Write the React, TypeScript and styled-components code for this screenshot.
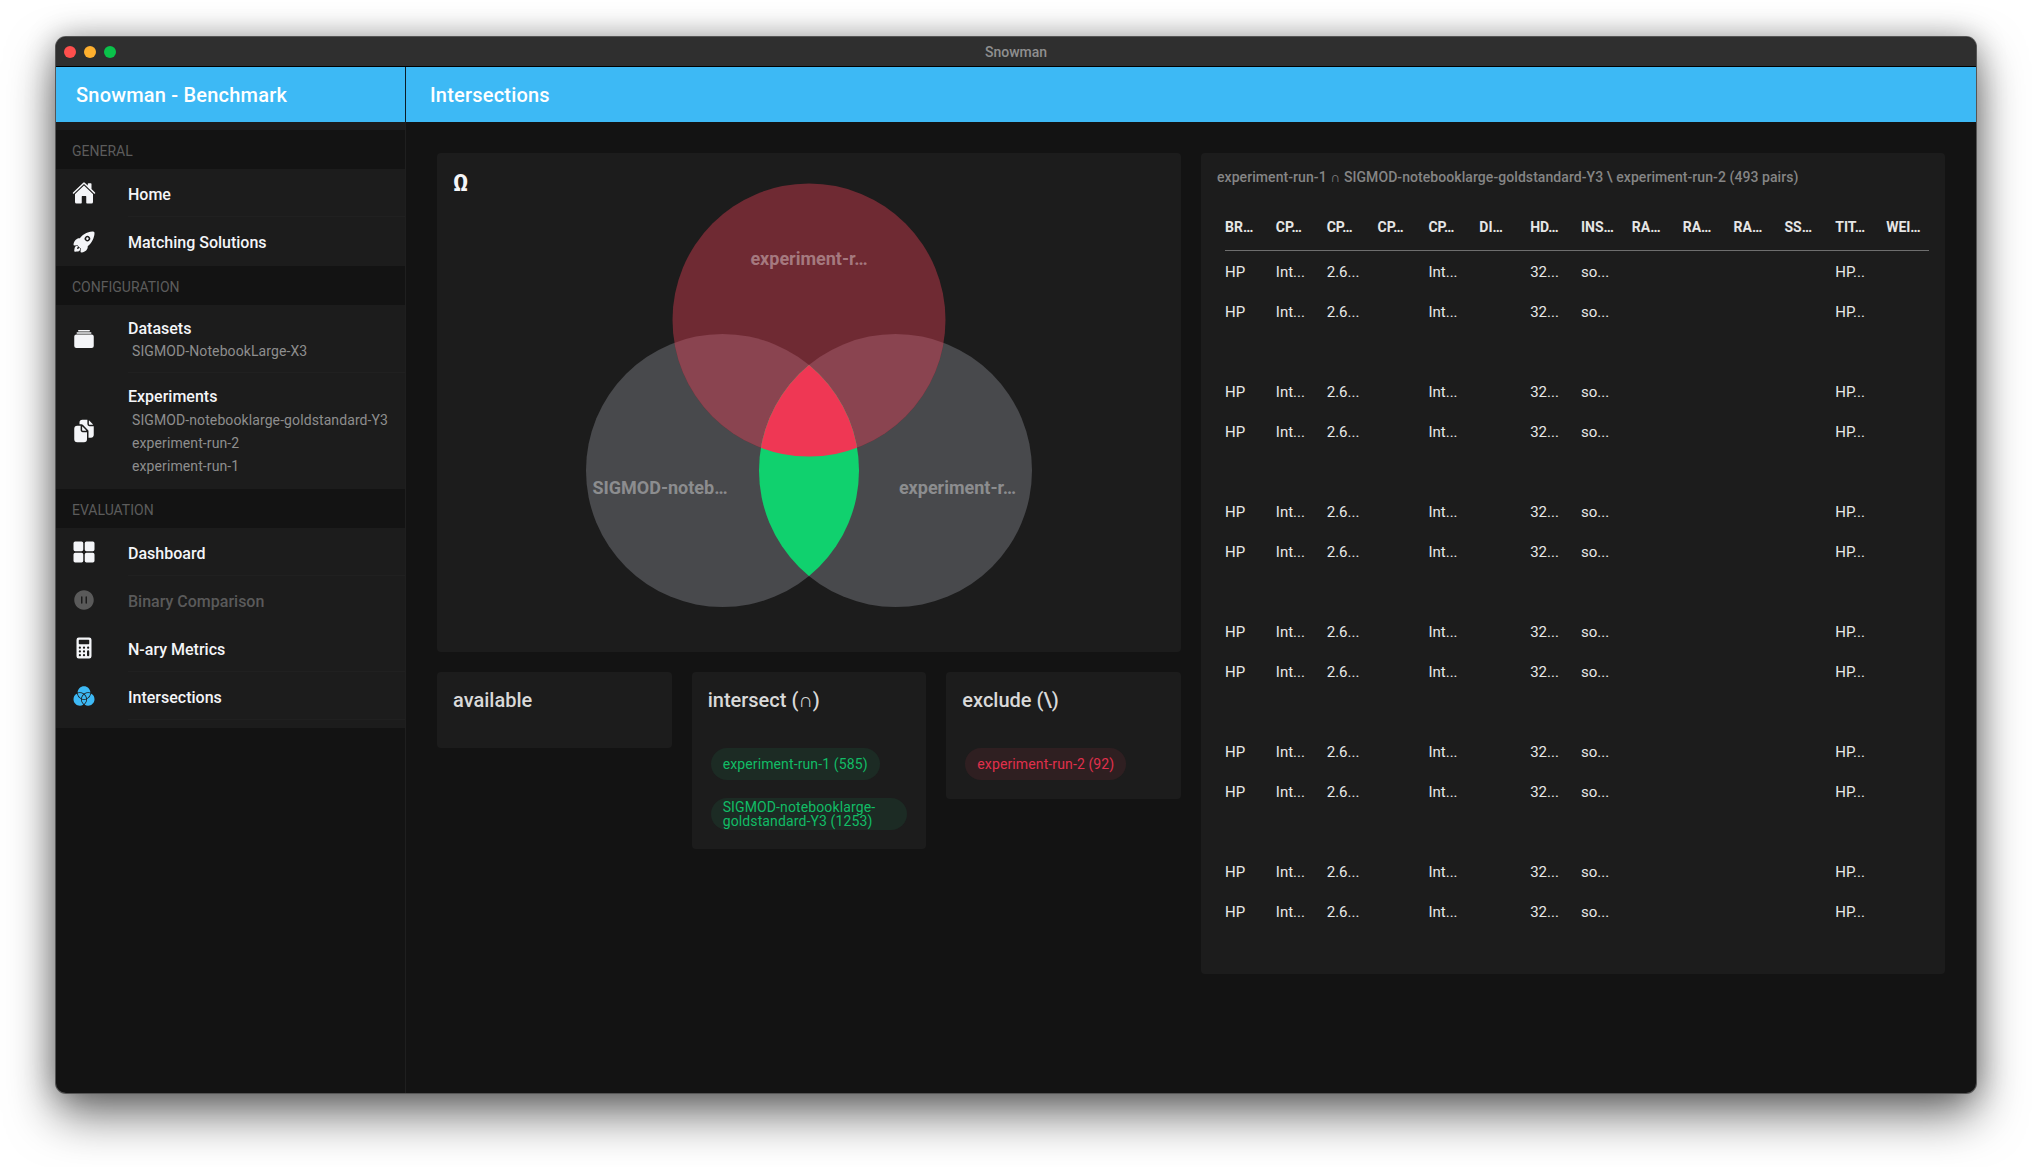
import React from 'react';
import styled, { createGlobalStyle } from 'styled-components';
import {
  IoHome,
  IoRocket,
  IoAlbums,
  IoDocuments,
  IoGrid,
  IoPauseCircle,
  IoCalculator,
  IoColorFilter,
} from 'react-icons/io5';

const GlobalStyle = createGlobalStyle`
  html, body {
    margin: 0;
    padding: 0;
    background: #ffffff;
    font-family: 'Roboto', 'Liberation Sans', sans-serif;
  }
  * { box-sizing: border-box; }
`;

const Desktop = styled.div`
  width: 2032px;
  height: 1167px;
  padding: 37px 56px 74px 56px;
  overflow: hidden;
  background: #ffffff;
`;

const Window = styled.div`
  width: 1920px;
  height: 1056px;
  display: flex;
  flex-direction: column;
  border-radius: 10px;
  overflow: hidden;
  background: #131313;
  box-shadow: 0 0 0 1px #555555, 0 22px 48px rgba(0, 0, 0, 0.55), 0 0 30px rgba(0, 0, 0, 0.3);
`;

const TitleBar = styled.div`
  height: 30px;
  flex: none;
  position: relative;
  display: flex;
  align-items: center;
  justify-content: center;
  background: #2f2f2f;
  border-bottom: 1px solid #000000;
`;

const Lights = styled.div`
  position: absolute;
  left: 8px;
  top: 9px;
  display: flex;
  gap: 8px;
`;

const Light = styled.span<{ $color: string }>`
  width: 12px;
  height: 12px;
  border-radius: 50%;
  background: ${(p) => p.$color};
`;

const WindowTitle = styled.div`
  font-size: 14px;
  font-weight: 500;
  color: #8f8f8f;
`;

const Body = styled.div`
  flex: 1;
  display: flex;
  min-height: 0;
`;

const SideColumn = styled.div`
  width: 350px;
  flex: none;
  display: flex;
  flex-direction: column;
  border-right: 1px solid #1f1f1f;
`;

const AppBar = styled.div`
  height: 55px;
  flex: none;
  display: flex;
  align-items: center;
  background: #3db9f5;
  color: #ffffff;
  font-size: 20px;
  font-weight: 500;
  letter-spacing: 0.2px;
`;

const SideBar = styled(AppBar)`
  padding-left: 20px;
  margin-right: -1px;
  border-right: 1px solid #0c1c26;
`;

const MainBar = styled(AppBar)`
  padding-left: 24px;
`;

const Nav = styled.nav`
  padding: 8px 0;
  background: #1c1c1c;
`;

const SectionLabel = styled.div`
  height: 39px;
  display: flex;
  align-items: center;
  padding: 3px 0 0 16px;
  background: #131313;
  color: #5c5c5c;
  font-size: 14px;
`;

const NavRow = styled.div<{ $height?: number; $disabled?: boolean }>`
  display: flex;
  align-items: center;
  height: ${(p) => p.$height ?? 48}px;
  padding-left: 16px;
  color: ${(p) => (p.$disabled ? '#5a5a5a' : '#f4f5f8')};
`;

const NavIcon = styled.div`
  width: 56px;
  flex: none;
  display: flex;
  align-items: center;
  font-size: 24px;
  svg { display: block; }
`;

const NavIconBlue = styled(NavIcon)`
  color: #3db9f5;
`;

const NavText = styled.div<{ $divider?: boolean; $sub?: boolean }>`
  flex: 1;
  align-self: stretch;
  display: flex;
  flex-direction: column;
  justify-content: center;
  padding-top: ${(p) => (p.$sub ? '2px' : '3px')};
  border-bottom: 1px solid ${(p) => (p.$divider ? '#202020' : 'transparent')};
`;

const NavTitle = styled.div<{ $spaced?: boolean }>`
  font-size: 16px;
  font-weight: 500;
  line-height: 23px;
  margin-bottom: ${(p) => (p.$spaced ? 1 : 0)}px;
`;

const NavSub = styled.div`
  font-size: 14px;
  line-height: 23px;
  padding-left: 4px;
  letter-spacing: 0.1px;
  color: #8e8e8e;
`;

const Main = styled.div`
  flex: 1;
  min-width: 0;
  display: flex;
  flex-direction: column;
`;

const Content = styled.div`
  flex: 1;
  display: grid;
  grid-template-columns: 744px 744px;
  gap: 20px;
  align-items: start;
  padding: 31px 31px 0;
`;

const LeftColumn = styled.div`
  display: flex;
  flex-direction: column;
  gap: 20px;
`;

const Card = styled.div`
  background: #1c1c1c;
  border-radius: 4px;
`;

const VennCard = styled(Card)`
  position: relative;
  height: 499px;
`;

const Omega = styled.div`
  position: absolute;
  left: 16px;
  top: 17px;
  font-size: 23px;
  font-weight: 700;
  color: #f4f5f8;
`;

const VennSvg = styled.svg`
  display: block;
  width: 744px;
  height: 499px;
`;

const VennLabel = styled.text`
  font-family: 'Roboto', sans-serif;
  font-size: 18px;
  font-weight: 700;
  fill: rgba(255, 255, 255, 0.38);
  text-anchor: middle;
`;

const Buckets = styled.div`
  display: grid;
  grid-template-columns: repeat(3, 1fr);
  gap: 20px;
  align-items: start;
`;

const BucketTitle = styled.div`
  height: 76px;
  padding: 16px;
  font-size: 20px;
  font-weight: 500;
  line-height: 24px;
  color: #d9d9d9;
`;

const ChipList = styled.div`
  display: flex;
  flex-direction: column;
  align-items: flex-start;
  gap: 18px;
  padding: 0 19px 19px;
`;

const Chip = styled.div<{ $tone: 'green' | 'red'; $wrapped?: boolean }>`
  height: 32px;
  display: flex;
  align-items: center;
  padding: 0 12px;
  border-radius: 16px;
  font-size: 14px;
  line-height: 14px;
  letter-spacing: 0.12px;
  white-space: pre-line;
  ${(p) => (p.$wrapped ? 'width: 196px;' : '')}
  color: ${(p) => (p.$tone === 'green' ? '#11bd66' : '#e0304c')};
  background: ${(p) => (p.$tone === 'green' ? '#1c2b24' : '#2f1f21')};
`;

const TableCard = styled(Card)`
  height: 821px;
  padding: 16px;
`;

const Caption = styled.div`
  font-size: 14px;
  font-weight: 500;
  line-height: 16px;
  letter-spacing: 0.07px;
  color: #858585;
`;

const Table = styled.div`
  margin: 25px 0 0 8px;
`;

const TableRow = styled.div<{ $head?: boolean }>`
  display: grid;
  grid-template-columns: repeat(14, 1fr);
  column-gap: 8px;
  height: 40px;
  padding-top: 1px;
  align-items: center;
  font-size: ${(p) => (p.$head ? 14 : 15)}px;
  font-weight: ${(p) => (p.$head ? 700 : 400)};
  color: ${(p) => (p.$head ? '#e6e6e6' : '#e8e8e8')};
  ${(p) => (p.$head ? 'height: 41px; padding: 0 0 7px; border-bottom: 1px solid #6e6e6e;' : '')}
`;

const Cell = styled.div`
  white-space: nowrap;
`;

const headCells = ['BR…', 'CP…', 'CP…', 'CP…', 'CP…', 'DI…', 'HD…', 'INS…', 'RA…', 'RA…', 'RA…', 'SS…', 'TIT…', 'WEI…'];
const rowCells = ['HP', 'Int...', '2.6...', '', 'Int...', '', '32...', 'so...', '', '', '', '', 'HP...', ''];
const groups = [0, 1, 2, 3, 4, 5];

const PairRow: React.FC = () => (
  <TableRow>
    {rowCells.map((c, i) => (
      <Cell key={i}>{c}</Cell>
    ))}
  </TableRow>
);

const Venn: React.FC = () => (
  <VennSvg viewBox="0 0 744 499">
    <defs>
      <clipPath id="clip-top">
        <circle cx="372" cy="167" r="136.5" />
      </clipPath>
      <clipPath id="clip-left">
        <circle cx="285.5" cy="317.5" r="136.5" />
      </clipPath>
      <clipPath id="clip-right">
        <circle cx="458.5" cy="317.5" r="136.5" />
      </clipPath>
    </defs>
    <circle cx="285.5" cy="317.5" r="136.5" fill="#48494c" />
    <circle cx="458.5" cy="317.5" r="136.5" fill="#48494c" />
    <circle cx="372" cy="167" r="136.5" fill="#6f2a33" />
    <g clipPath="url(#clip-top)">
      <circle cx="285.5" cy="317.5" r="136.5" fill="#8a4450" />
      <circle cx="458.5" cy="317.5" r="136.5" fill="#8a4450" />
    </g>
    <g clipPath="url(#clip-left)">
      <circle cx="458.5" cy="317.5" r="136.5" fill="#10d16e" />
    </g>
    <g clipPath="url(#clip-left)">
      <g clipPath="url(#clip-right)">
        <circle cx="372" cy="167" r="136.5" fill="#ef3754" />
      </g>
    </g>
    <VennLabel x="372" y="112">experiment-r…</VennLabel>
    <VennLabel x="223" y="341">SIGMOD-noteb…</VennLabel>
    <VennLabel x="520.5" y="341">experiment-r…</VennLabel>
  </VennSvg>
);

const App: React.FC = () => (
  <Desktop>
    <GlobalStyle />
    <Window>
      <TitleBar>
        <Lights>
          <Light $color="#ff4f4d" />
          <Light $color="#ffb02e" />
          <Light $color="#0ac24a" />
        </Lights>
        <WindowTitle>Snowman</WindowTitle>
      </TitleBar>
      <Body>
        <SideColumn>
          <SideBar>Snowman - Benchmark</SideBar>
          <Nav>
            <SectionLabel>GENERAL</SectionLabel>
            <NavRow>
              <NavIcon><IoHome /></NavIcon>
              <NavText $divider><NavTitle>Home</NavTitle></NavText>
            </NavRow>
            <NavRow $height={49}>
              <NavIcon><IoRocket /></NavIcon>
              <NavText><NavTitle>Matching Solutions</NavTitle></NavText>
            </NavRow>
            <SectionLabel>CONFIGURATION</SectionLabel>
            <NavRow $height={68}>
              <NavIcon><IoAlbums /></NavIcon>
              <NavText $divider $sub>
                <NavTitle>Datasets</NavTitle>
                <NavSub>SIGMOD-NotebookLarge-X3</NavSub>
              </NavText>
            </NavRow>
            <NavRow $height={116}>
              <NavIcon><IoDocuments /></NavIcon>
              <NavText $sub>
                <NavTitle $spaced>Experiments</NavTitle>
                <NavSub>SIGMOD-notebooklarge-goldstandard-Y3</NavSub>
                <NavSub>experiment-run-2</NavSub>
                <NavSub>experiment-run-1</NavSub>
              </NavText>
            </NavRow>
            <SectionLabel>EVALUATION</SectionLabel>
            <NavRow>
              <NavIcon><IoGrid /></NavIcon>
              <NavText $divider><NavTitle>Dashboard</NavTitle></NavText>
            </NavRow>
            <NavRow $disabled>
              <NavIcon><IoPauseCircle /></NavIcon>
              <NavText><NavTitle>Binary Comparison</NavTitle></NavText>
            </NavRow>
            <NavRow>
              <NavIcon><IoCalculator /></NavIcon>
              <NavText $divider><NavTitle>N-ary Metrics</NavTitle></NavText>
            </NavRow>
            <NavRow>
              <NavIconBlue><IoColorFilter /></NavIconBlue>
              <NavText $divider><NavTitle>Intersections</NavTitle></NavText>
            </NavRow>
          </Nav>
        </SideColumn>
        <Main>
          <MainBar>Intersections</MainBar>
          <Content>
            <LeftColumn>
              <VennCard>
                <Omega>Ω</Omega>
                <Venn />
              </VennCard>
              <Buckets>
                <Card>
                  <BucketTitle>available</BucketTitle>
                </Card>
                <Card>
                  <BucketTitle>intersect (∩)</BucketTitle>
                  <ChipList>
                    <Chip $tone="green">experiment-run-1 (585)</Chip>
                    <Chip $tone="green" $wrapped>{'SIGMOD-notebooklarge-\ngoldstandard-Y3 (1253)'}</Chip>
                  </ChipList>
                </Card>
                <Card>
                  <BucketTitle>exclude (\)</BucketTitle>
                  <ChipList>
                    <Chip $tone="red">experiment-run-2 (92)</Chip>
                  </ChipList>
                </Card>
              </Buckets>
            </LeftColumn>
            <TableCard>
              <Caption>experiment-run-1 ∩ SIGMOD-notebooklarge-goldstandard-Y3 \ experiment-run-2 (493 pairs)</Caption>
              <Table>
                <TableRow $head>
                  {headCells.map((c, i) => (
                    <Cell key={i}>{c}</Cell>
                  ))}
                </TableRow>
                {groups.map((g) => (
                  <React.Fragment key={g}>
                    <PairRow />
                    <PairRow />
                    {g < groups.length - 1 && <TableRow />}
                  </React.Fragment>
                ))}
              </Table>
            </TableCard>
          </Content>
        </Main>
      </Body>
    </Window>
  </Desktop>
);

export default App;
